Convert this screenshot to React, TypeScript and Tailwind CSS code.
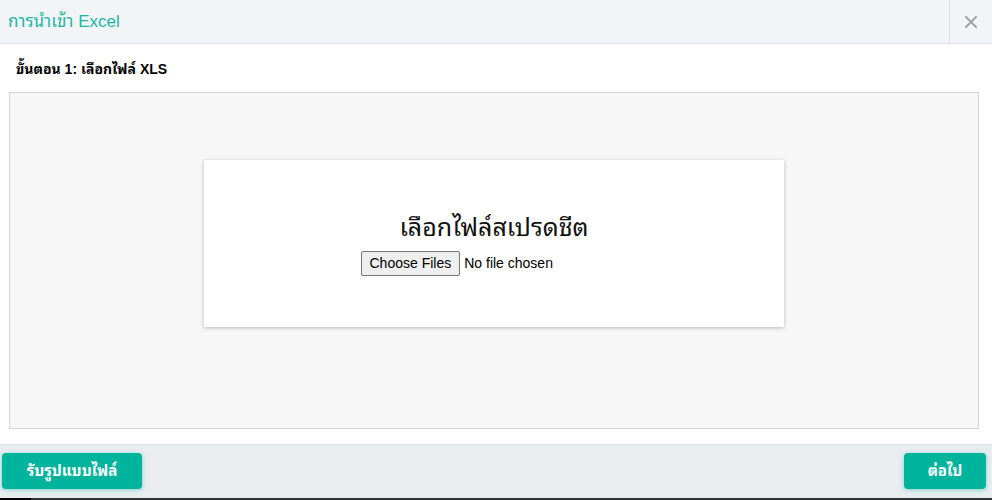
import React from "react";

export default function App() {
  const font = { fontFamily: '"Liberation Sans", "Noto Sans Thai Looped", "Noto Serif Thai", "Noto Sans Thai", "Noto Sans", Tahoma, sans-serif' };
  return (
    <div className="w-[992px] h-[500px] bg-white flex flex-col overflow-hidden" style={font}>
      <div className="h-[44px] bg-[#f3f4f7] border-b border-[#dde1e6] flex items-stretch">
        <div className="flex-1 flex items-center pl-[8px] text-[17px] text-[#20b7a5]">การนำเข้า Excel</div>
        <div className="w-[43px] border-l border-[#dde1e6] flex items-center justify-center text-[#a0a0a0]">
          <svg width="12" height="12" viewBox="0 0 12 12">
            <path d="M1 1 L11 11 M11 1 L1 11" stroke="#a3a3a3" strokeWidth="2" strokeLinecap="round" />
          </svg>
        </div>
      </div>
      <div className="flex-1 flex flex-col">
        <div className="h-[48px] flex items-center pl-[16px] text-[14px] font-bold text-black pt-[2px]">ขั้นตอน 1: เลือกไฟล์ XLS</div>
        <div className="ml-[9px] mr-[13px] h-[337px] bg-[#f7f7f7] border border-[#d4d4d4] flex justify-center pt-[67px]">
          <div className="w-[580px] h-[167px] bg-white shadow-[0_1px_4px_rgba(0,0,0,0.25)] flex flex-col items-center pt-[51px]">
            <div className="text-[25px] text-[#111] leading-[32px]">เลือกไฟล์สเปรดชีต</div>
            <input type="file" multiple className="mt-[8px] text-[14px] text-black w-[267px] file:mr-[4px] file:px-[8px] file:py-[1px] file:border file:border-[#767676] file:rounded-[2px] file:bg-[#efefef] file:text-[14px]" style={font} />
          </div>
        </div>
      </div>
      <div className="h-[56px] bg-[#eaedf0] border-t border-[#d9dee3] flex items-start justify-between pt-[8px] px-[2px] pr-[6px] relative">
        <button className="h-[36px] w-[140px] rounded-[4px] bg-[#00b39c] text-white font-bold text-[15px] shadow-[0_1px_5px_rgba(0,179,156,0.45)]">รับรูปแบบไฟล์</button>
        <button className="h-[36px] w-[82px] rounded-[4px] bg-[#00b39c] text-white font-bold text-[15px] shadow-[0_1px_5px_rgba(0,179,156,0.45)]">ต่อไป</button>
        <div className="absolute left-0 right-0 bottom-0 h-[2px] bg-[#333] flex">
          <div className="w-[31px] bg-black" />
        </div>
      </div>
    </div>
  );
}
